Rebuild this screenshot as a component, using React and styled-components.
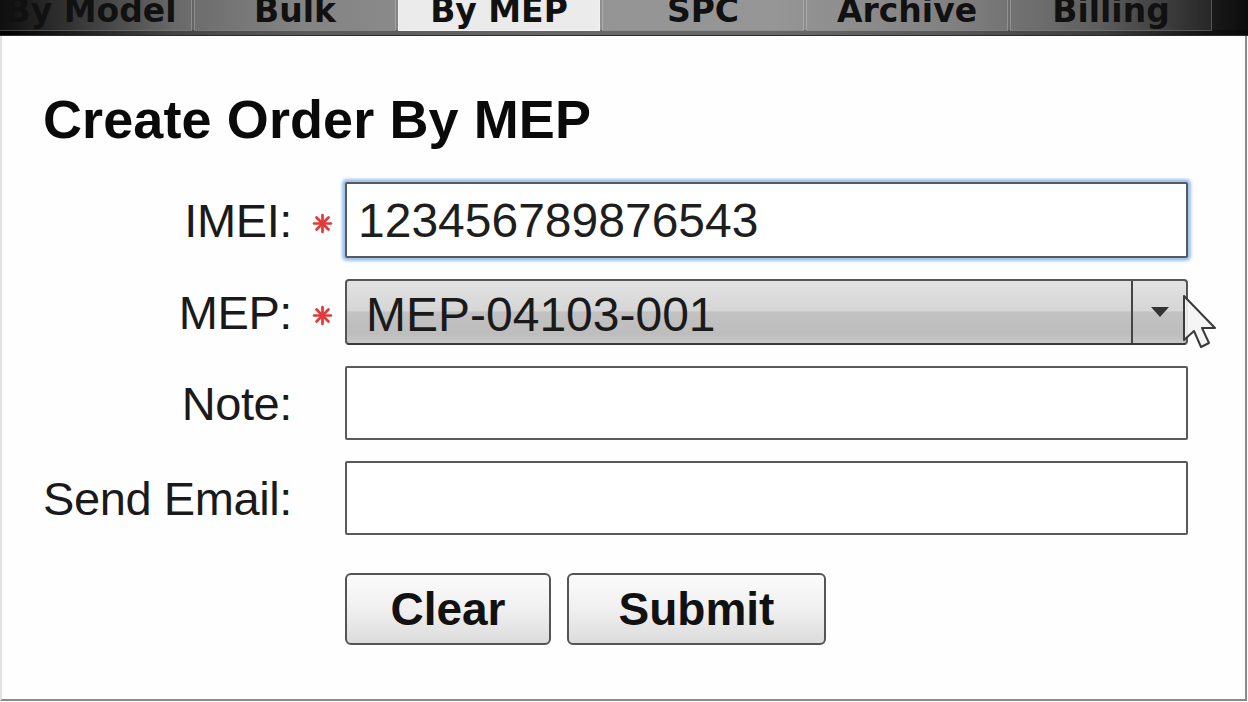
import React from "react";
import styled, { createGlobalStyle } from "styled-components";

const Global = createGlobalStyle`
  html, body { margin: 0; padding: 0; background: #fdfdfd; }
  body { width: 1248px; height: 702px; overflow: hidden; }
  #root { width: 1248px; height: 702px; }
`;

const Page = styled.div`
  width: 1248px;
  height: 702px;
  display: flex;
  flex-direction: column;
  overflow: hidden;
`;

const TabBar = styled.div`
  height: 36px;
  flex: none;
  display: flex;
  gap: 2px;
  box-sizing: border-box;
  padding-bottom: 5px;
  background: linear-gradient(
    to right,
    #000 0%,
    #2a2a2a 6%,
    #606060 14%,
    #7c7c7c 24%,
    #8e8e8e 45%,
    #909090 62%,
    #7a7a7a 76%,
    #555 88%,
    #1a1a1a 97%,
    #0c0c0c 100%
  );
  border-bottom: 1px solid #2c2c2c;
  box-shadow: inset 0 -5px 0 rgba(0, 0, 0, 0.28);
`;

const Tab = styled.div`
  width: 202px;
  flex: none;
  box-sizing: border-box;
  height: 31px;
  overflow: hidden;
  text-align: center;
  font-family: "DejaVu Sans", Verdana, sans-serif;
  font-weight: bold;
  font-size: 33px;
  line-height: 22px;
  color: #111;
  border: 1px solid ${(p) => (p.$active ? "#f2f2f2" : "rgba(255,255,255,0.22)")};
  border-top: none;
  background: ${(p) => (p.$active ? "#ebebeb" : "rgba(255,255,255,0.06)")};
  margin-left: ${(p) => (p.$first ? "-10px" : "0")};
`;

const Panel = styled.div`
  width: 1247px;
  height: 665px;
  box-sizing: border-box;
  background: #fefefe;
  border-left: 2px solid #e2e2e2;
  border-right: 2px solid #8a8a8a;
  border-bottom: 2px solid #8a8a8a;
  padding: 56px 0 0 41px;
  display: flex;
  flex-direction: column;
`;

const Title = styled.h1`
  margin: 0;
  font-family: "Liberation Sans", Arial, sans-serif;
  font-weight: bold;
  font-size: 54px;
  line-height: 54px;
  color: #0a0a0a;
  letter-spacing: 0.1px;
`;

const Form = styled.div`
  margin-top: 36px;
  display: grid;
  grid-template-columns: 249px 53px 843px;
  row-gap: 21px;
  align-items: center;
`;

const Label = styled.label`
  font-family: "Liberation Sans", Arial, sans-serif;
  font-size: 47px;
  letter-spacing: -0.4px;
  color: #1a1a1a;
  text-align: right;
  white-space: nowrap;
`;

const StarCell = styled.div`
  display: flex;
  align-items: center;
  padding-left: 20px;
  padding-top: 6px;
`;

const Field = styled.div`
  position: relative;
  height: ${(p) => p.$h}px;
`;

const TextInput = styled.div`
  box-sizing: border-box;
  height: 100%;
  border: 2px solid #5a5a5a;
  border-radius: 2px;
  background: #fff;
  padding-left: 11px;
  display: flex;
  align-items: center;
  font-family: "Liberation Sans", Arial, sans-serif;
  font-size: 48px;
  color: #1e1e1e;
  box-shadow: ${(p) =>
    p.$focus ? "0 0 3px 3px rgba(120, 175, 235, 0.75)" : "none"};
`;

const Select = styled.div`
  box-sizing: border-box;
  height: 100%;
  border: 2px solid #555;
  border-bottom-color: #3a3a3a;
  border-radius: 4px;
  background: linear-gradient(
    to bottom,
    #e2e2e2 0%,
    #d6d6d6 48%,
    #c2c2c2 50%,
    #bdbdbd 85%,
    #c8c8c8 100%
  );
  display: flex;
  align-items: stretch;
  font-family: "Liberation Sans", Arial, sans-serif;
  font-size: 48px;
  color: #1a1a1a;
`;

const SelectValue = styled.div`
  flex: 1;
  display: flex;
  align-items: center;
  padding-left: 19px;
  padding-top: 4px;
`;

const SelectArrow = styled.div`
  width: 53px;
  border-left: 2px solid #444;
  display: flex;
  align-items: center;
  justify-content: center;
`;

const Cursor = styled.svg`
  position: absolute;
  left: 837px;
  top: 15px;
  pointer-events: none;
`;

const Buttons = styled.div`
  grid-column: 3;
  display: flex;
  gap: 16px;
  margin-top: 17px;
`;

const Button = styled.button`
  width: ${(p) => p.$w}px;
  height: 72px;
  box-sizing: border-box;
  border: 2px solid #555;
  border-radius: 6px;
  background: linear-gradient(to bottom, #fbfbfb 0%, #f0f0f0 50%, #dcdcdc 100%);
  font-family: "Liberation Sans", Arial, sans-serif;
  font-weight: bold;
  font-size: 46px;
  color: #111;
  padding: 0;
  cursor: pointer;
`;

const Star = () => (
  <svg width="21" height="21" viewBox="0 0 20 20">
    <g stroke="#e03a3a" strokeWidth="2.6" strokeLinecap="round">
      <line x1="10" y1="2" x2="10" y2="18" />
      <line x1="2" y1="10" x2="18" y2="10" />
      <line x1="4.3" y1="4.3" x2="15.7" y2="15.7" />
      <line x1="15.7" y1="4.3" x2="4.3" y2="15.7" />
    </g>
  </svg>
);

const tabs = ["By Model", "Bulk", "By MEP", "SPC", "Archive", "Billing"];

export default function App() {
  return (
    <>
      <Global />
      <Page>
        <TabBar>
          {tabs.map((t, i) => (
            <Tab key={t} $first={i === 0} $active={t === "By MEP"}>
              {t}
            </Tab>
          ))}
        </TabBar>
        <Panel>
          <Title>Create Order By MEP</Title>
          <Form>
            <Label>IMEI:</Label>
            <StarCell>
              <Star />
            </StarCell>
            <Field $h={76}>
              <TextInput $focus>123456789876543</TextInput>
            </Field>

            <Label>MEP:</Label>
            <StarCell>
              <Star />
            </StarCell>
            <Field $h={66}>
              <Select>
                <SelectValue>MEP-04103-001</SelectValue>
                <SelectArrow>
                  <svg width="18" height="10" viewBox="0 0 18 10">
                    <path d="M0 0 H18 L9 10 Z" fill="#333" />
                  </svg>
                </SelectArrow>
              </Select>
              <Cursor width="36" height="56" viewBox="0 0 36 56">
                <path
                  d="M2 2 L2 46 L12 37 L19 53 L27 49 L20 34 L33 34 Z"
                  fill="#f4f4f4"
                  fillOpacity="0.92"
                  stroke="#3a3a3a"
                  strokeWidth="2"
                  strokeLinejoin="round"
                />
              </Cursor>
            </Field>

            <Label>Note:</Label>
            <StarCell />
            <Field $h={74}>
              <TextInput />
            </Field>

            <Label>Send Email:</Label>
            <StarCell />
            <Field $h={74}>
              <TextInput />
            </Field>

            <Buttons>
              <Button $w={206}>Clear</Button>
              <Button $w={259}>Submit</Button>
            </Buttons>
          </Form>
        </Panel>
      </Page>
    </>
  );
}
